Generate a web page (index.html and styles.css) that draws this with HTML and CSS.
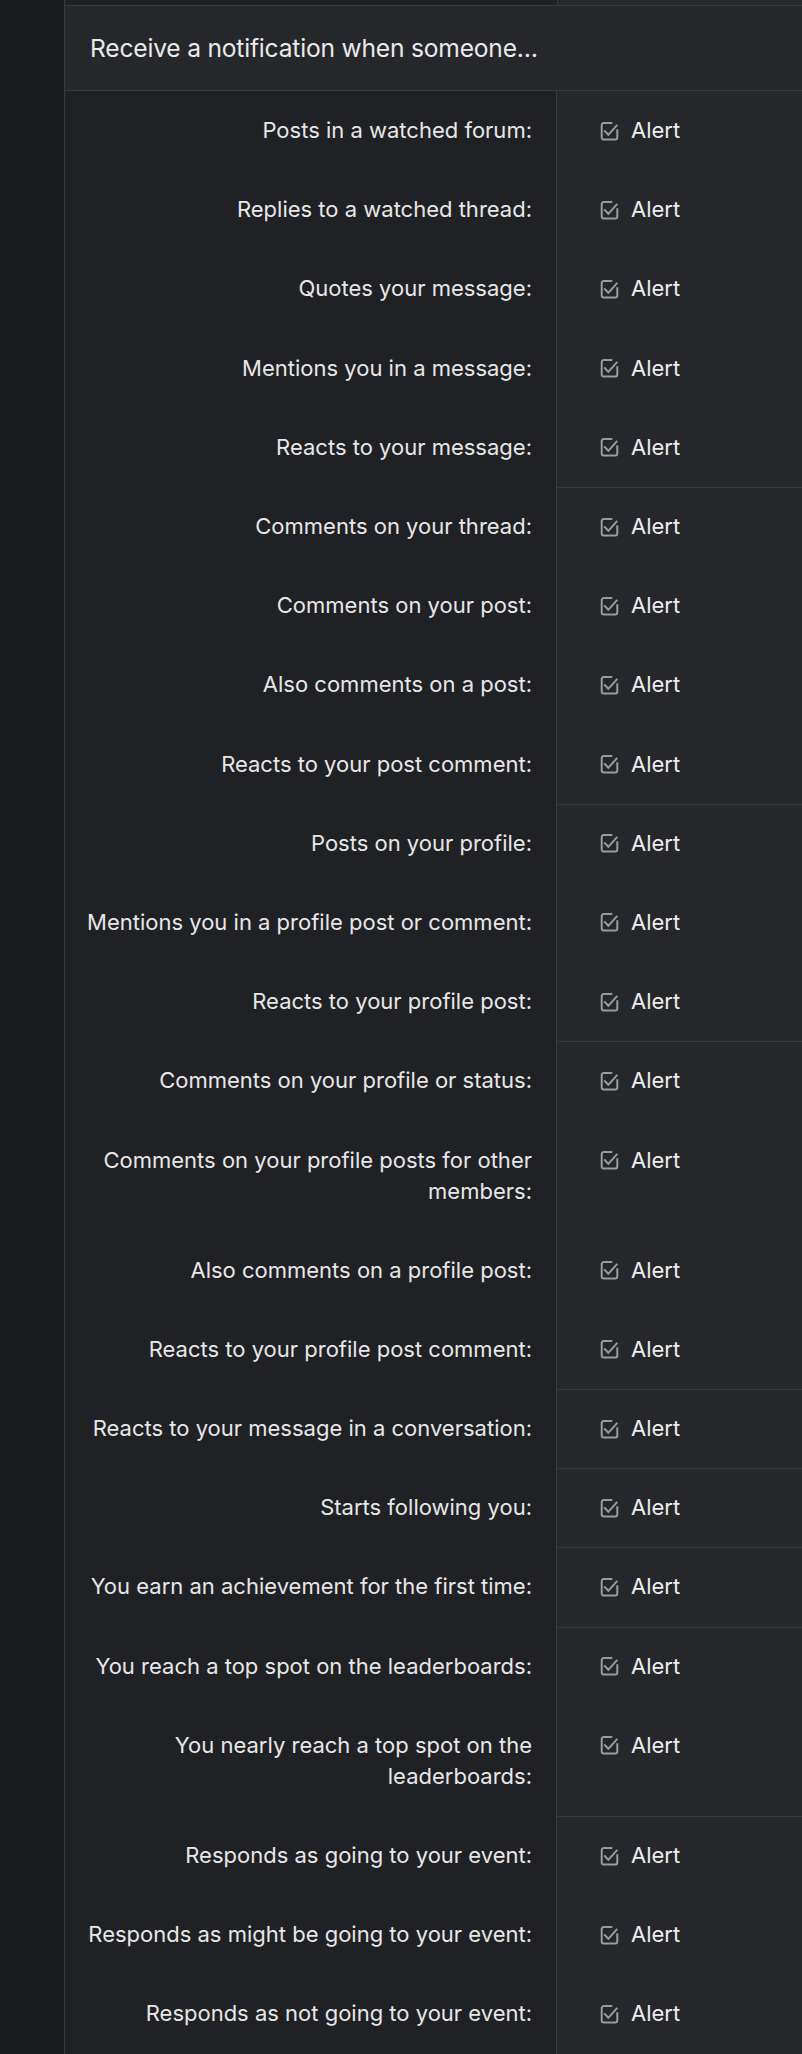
FILE: index.html
```html
<!DOCTYPE html>
<html lang="en">
<head>
<meta charset="UTF-8" />
<meta name="viewport" content="width=device-width, initial-scale=1" />
<title>Alert preferences</title>
<link rel="stylesheet" href="styles.css">
</head>
<body>
  <div class="page">
    <div class="block">
      <!-- tail of the previous block row -->
      <div class="prev-row">
        <div class="prev-label"></div>
        <div class="prev-value"></div>
      </div>

      <h3 class="block-header">Receive a notification when someone…</h3>

      <div class="block-body" id="rows"></div>
    </div>
  </div>

  <script>
    // label text, and whether the row opens a new content-type group
    const rows = [
      ['Posts in a watched forum:', false],
      ['Replies to a watched thread:', false],
      ['Quotes your message:', false],
      ['Mentions you in a message:', false],
      ['Reacts to your message:', false],
      ['Comments on your thread:', true],
      ['Comments on your post:', false],
      ['Also comments on a post:', false],
      ['Reacts to your post comment:', false],
      ['Posts on your profile:', true],
      ['Mentions you in a profile post or comment:', false],
      ['Reacts to your profile post:', false],
      ['Comments on your profile or status:', true],
      ['Comments on your profile posts for other members:', false],
      ['Also comments on a profile post:', false],
      ['Reacts to your profile post comment:', false],
      ['Reacts to your message in a conversation:', true],
      ['Starts following you:', true],
      ['You earn an achievement for the first time:', true],
      ['You reach a top spot on the leaderboards:', true],
      ['You nearly reach a top spot on the leaderboards:', false],
      ['Responds as going to your event:', true],
      ['Responds as might be going to your event:', false],
      ['Responds as not going to your event:', false]
    ];

    const checkIcon = '<svg class="check-icon" viewBox="0 0 20 20" aria-hidden="true">' +
      '<path d="M13.3 2.1H4.7a2 2 0 0 0-2 2v12.3a2 2 0 0 0 2 2h11.6a2 2 0 0 0 2-2V8.2"/>' +
      '<path d="M5.2 9.4l4.1 4.4 9-10"/></svg>';

    const list = document.getElementById('rows');
    rows.forEach(([label, newGroup]) => {
      const row = document.createElement('dl');
      row.className = 'form-row' + (newGroup ? ' group-start' : '');
      row.innerHTML =
        `<dt>${label}</dt>` +
        `<dd><label class="check">${checkIcon}<span>Alert</span></label></dd>`;
      list.appendChild(row);
    });
  </script>
</body>
</html>
```

FILE: styles.css
```css
body {
  margin: 0;
  background: #1b1c1f;
  color: #e7e7e9;
  font-family: Inter, "Noto Sans", Arial, sans-serif;
}
.page {
  padding-left: 64px;
  overflow: hidden;
}
.block {
  border-left: 1px solid #393a3e;
  background: #26272b;
}
.prev-row {
  display: flex;
  height: 5px;
  border-bottom: 1px solid #393a3e;
}
.prev-label {
  width: 492px;
  background: #202124;
  border-right: 1px solid #393a3e;
}
.prev-value {
  flex: 1;
}
.block-header {
  margin: 0;
  padding: 0 25px;
  height: 84px;
  display: flex;
  align-items: center;
  font-size: 24.6px;
  font-weight: 400;
  letter-spacing: -0.2px;
  color: #eaeaec;
  border-bottom: 1px solid #393a3e;
}
.form-row {
  display: flex;
  margin: 0;
}
.form-row dt {
  width: 492px;
  box-sizing: border-box;
  padding: 24.1px 24px 24.1px 20px;
  text-align: right;
  font-size: 22px;
  line-height: 31px;
  background: #202124;
  border-right: 1px solid #393a3e;
}
.form-row dd {
  flex: 1;
  margin: 0;
  padding: 24.1px 0 24.1px 42px;
  font-size: 22px;
  line-height: 31px;
}
.form-row.group-start dd {
  box-shadow: inset 0 1px 0 #393a3e;
}
.check {
  display: flex;
  align-items: center;
  gap: 12px;
  color: #ededef;
}
.check-icon {
  width: 20px;
  height: 20px;
  fill: none;
  stroke: #9a9b9f;
  stroke-width: 2;
}
```
